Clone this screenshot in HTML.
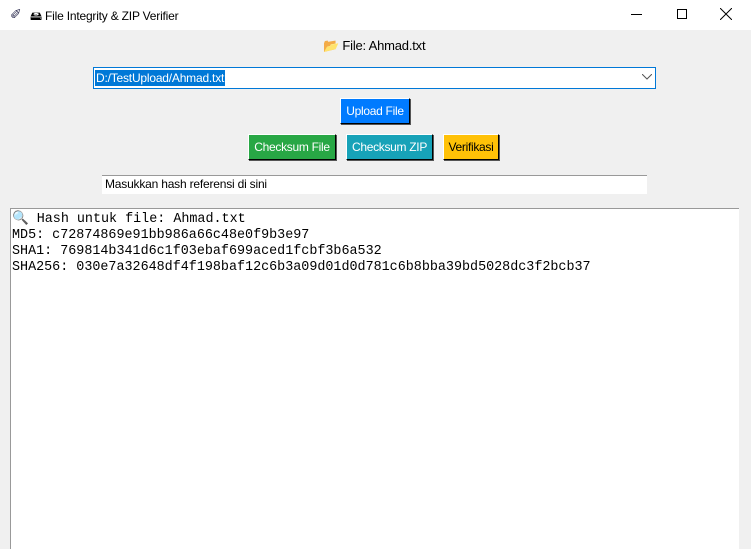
<!DOCTYPE html>
<html><head><style>
body{margin:0;width:751px;height:549px;background:#f0f0f0;position:relative;overflow:hidden;font-family:"Segoe UI","Liberation Sans",sans-serif;}
.a{position:absolute;box-sizing:border-box}
.btn{font-size:12px;letter-spacing:-0.3px;white-space:nowrap;display:flex;align-items:center;justify-content:center;border:1px solid #000;border-top-color:#fff;border-left-color:#fff;box-shadow:1px 1px 0 #555}
.mono{font-family:"Courier New","Liberation Mono",monospace;font-size:13.4px;line-height:16px;white-space:pre;color:#000}
</style></head><body>
<div class="a" style="left:0;top:0;width:751px;height:30px;background:#fff"></div>
<div class="a" style="left:10px;top:6px;font-size:14px;color:#335">&#x2710;</div>
<div class="a" style="left:30px;top:7px;font-size:12px;color:#000;letter-spacing:-0.2px">&#x1F5B4; File Integrity &amp; ZIP Verifier</div>
<div class="a" style="left:631px;top:14px;width:11px;height:1px;background:#000"></div>
<div class="a" style="left:677px;top:9px;width:10px;height:10px;border:1px solid #000"></div>
<svg class="a" style="left:720px;top:8px" width="12" height="12"><path d="M0 0L12 12M12 0L0 12" stroke="#000" stroke-width="1"/></svg>
<div class="a" style="left:323px;top:38px;font-size:13px;color:#000;letter-spacing:-0.2px">&#x1F4C2; File: Ahmad.txt</div>
<div class="a" style="left:93px;top:67px;width:563px;height:22px;background:#fff;border:1px solid #0078d7"></div>
<div class="a" style="left:95px;top:70px;height:16px;padding:0 1px;background:#0078d7;color:#fff;font-size:12px;line-height:16px;letter-spacing:-0.2px">D:/TestUpload/Ahmad.txt</div>
<svg class="a" style="left:642px;top:74px" width="10" height="6"><path d="M0 0L5 5L10 0" stroke="#555" fill="none"/></svg>
<div class="a btn" style="left:340px;top:98px;width:70px;height:26px;background:#007bff;color:#fff">Upload File</div>
<div class="a btn" style="left:248px;top:134px;width:88px;height:26px;background:#28a745;color:#fff">Checksum File</div>
<div class="a btn" style="left:346px;top:134px;width:87px;height:26px;background:#17a2b8;color:#fff">Checksum ZIP</div>
<div class="a btn" style="left:443px;top:134px;width:56px;height:26px;background:#ffc107;color:#000">Verifikasi</div>
<div class="a" style="left:102px;top:175px;width:545px;height:19px;background:#fff;border-top:1px solid #999;font-size:12px;line-height:17px;padding-left:3px;letter-spacing:-0.2px">Masukkan hash referensi di sini</div>
<div class="a" style="left:10px;top:208px;width:729px;height:341px;background:#fff;border-top:1px solid #999;border-left:1px solid #999"></div>
<div class="a mono" style="left:12px;top:212px">&#x1F50D; Hash untuk file: Ahmad.txt
MD5: c72874869e91bb986a66c48e0f9b3e97
SHA1: 769814b341d6c1f03ebaf699aced1fcbf3b6a532
SHA256: 030e7a32648df4f198baf12c6b3a09d01d0d781c6b8bba39bd5028dc3f2bcb37</div>
</body></html>
